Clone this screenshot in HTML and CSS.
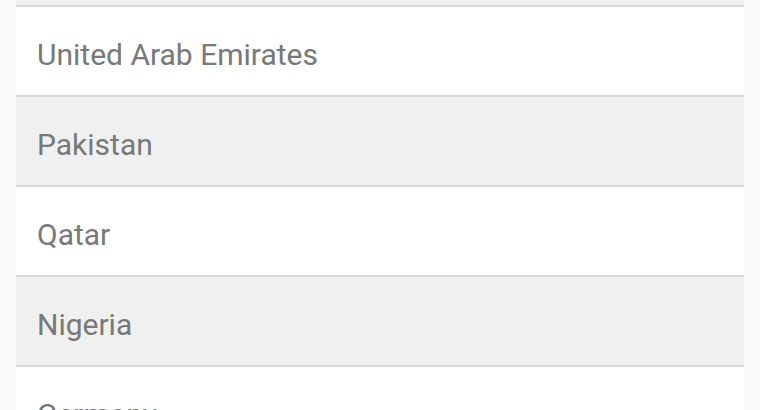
FILE: index.html
```html
<!DOCTYPE html>
<html>
<head>
<meta charset="utf-8">
<link rel="stylesheet" href="styles.css">
</head>
<body>
<ul class="list">
  <li class="row alt"></li>
  <li class="row">United Arab Emirates</li>
  <li class="row alt">Pakistan</li>
  <li class="row">Qatar</li>
  <li class="row alt">Nigeria</li>
  <li class="row">Germany</li>
</ul>
</body>
</html>
```
FILE: styles.css
```css
html, body {
  margin: 0;
  padding: 0;
  background: #fafafa;
  overflow: hidden;
}
.list {
  list-style: none;
  margin: -83px 16px 0 16px;
  padding: 0;
}
.row {
  height: 82px;
  box-sizing: content-box;
  display: flex;
  align-items: center;
  padding: 6px 0 0 21px;
  background: #ffffff;
  border-bottom: 2px solid #d9d9d9;
  box-shadow: 0 1px 1px rgba(0,0,0,0.09);
  font-family: Roboto, "Noto Sans", sans-serif;
  font-size: 30px;
  color: #787878;
  position: relative;
}
.row.alt {
  background: #f0f0f0;
}
```
